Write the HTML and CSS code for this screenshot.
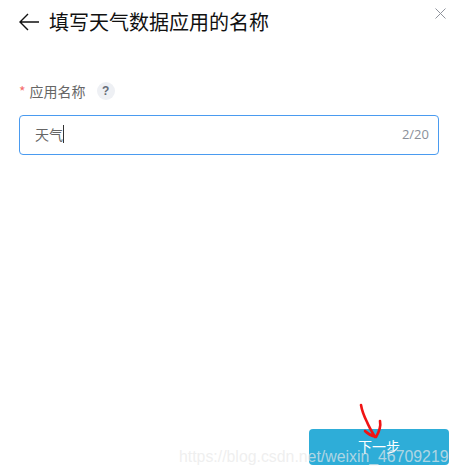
FILE: index.html
```html
<!DOCTYPE html>
<html lang="zh">
<head>
<meta charset="utf-8">
<title>填写天气数据应用的名称</title>
<link rel="stylesheet" href="styles.css">
</head>
<body>
<main class="dialog">
  <header class="head">
    <svg class="back" width="22" height="18" viewBox="0 0 22 18"><path d="M21 9H2M10 1 2 9l8 8" fill="none" stroke="#111" stroke-width="1.4"/></svg>
    <h1 class="title">填写天气数据应用的名称</h1>
    <svg class="close" width="11" height="11" viewBox="0 0 11 11"><path d="M.5.5l10 10M10.5.5l-10 10" fill="none" stroke="#8f939c" stroke-width="1"/></svg>
  </header>
  <div class="label-row">
    <span class="star">*</span>
    <span class="label">应用名称</span>
    <span class="help">?</span>
  </div>
  <div class="field">
    <span class="value">天气</span><span class="caret"></span>
    <span class="count">2/20</span>
  </div>
  <div class="spacer"></div>
  <div class="actions">
    <button class="next" type="button">下一步</button>
    <svg class="arrow" width="24" height="42" viewBox="0 0 24 42"><path d="M2 2c1 6 3 11 6 17 2 5 5 10 8 15M21 18c1 5-1 11-4 16-4-1-8-3-11-6" fill="none" stroke="#f01414" stroke-width="2.6" stroke-linecap="round" stroke-linejoin="round"/></svg>
  </div>
  <div class="watermark">https://blog.csdn.net/weixin_46709219</div>
</main>
</body>
</html>
```

FILE: styles.css
```css
* { box-sizing: border-box; }
html, body { margin: 0; height: 100%; background: #fff; }
body { font-family: "Noto Sans CJK SC", "Noto Sans", sans-serif; }
.dialog { position: relative; width: 460px; height: 476px; padding: 0 21px 0 18px; display: flex; flex-direction: column; overflow: hidden; }
.head { display: flex; align-items: center; height: 44px; position: relative; }
.back { flex: none; margin-right: 9px; }
.title { margin: 0; font-size: 20px; line-height: 28px; font-weight: 400; color: #111; }
.close { position: absolute; right: -7px; top: 8px; }
.label-row { display: flex; align-items: center; margin: 36px 0 0 1px; height: 22px; }
.star { color: #f56c6c; font-size: 14px; margin-right: 4px; }
.label { color: #666; font-size: 14px; }
.help { width: 18px; height: 18px; margin-left: 11px; border-radius: 50%; background: #eef0f4; color: #666c78; font: 700 12px/18px "Liberation Sans", sans-serif; text-align: center; }
.field { display: flex; align-items: center; height: 40px; margin: 13px 0 0 1px; padding: 0 9px 2px 15px; border: 1px solid #4a9bf0; border-radius: 4px; }
.value { color: #666; font-size: 14px; }
.caret { width: 1px; height: 18px; background: #333; }
.count { margin-left: auto; color: #8a8f99; font: 13px "Open Sans", sans-serif; }
.spacer { flex: 1; }
.actions { display: flex; justify-content: flex-end; position: relative; margin: 0 -10px 11px 0; }
.next { width: 140px; height: 36px; padding-bottom: 3px; border: 0; border-radius: 4px; background: #2eadd8; color: #fff; font: 14px "Noto Sans CJK SC", sans-serif; }
.arrow { position: absolute; right: 66px; top: -26px; }
.watermark { position: absolute; left: 179px; top: 448px; color: rgba(232,232,232,.7); font: 15.85px/18px "Liberation Sans", sans-serif; white-space: nowrap; }
```
